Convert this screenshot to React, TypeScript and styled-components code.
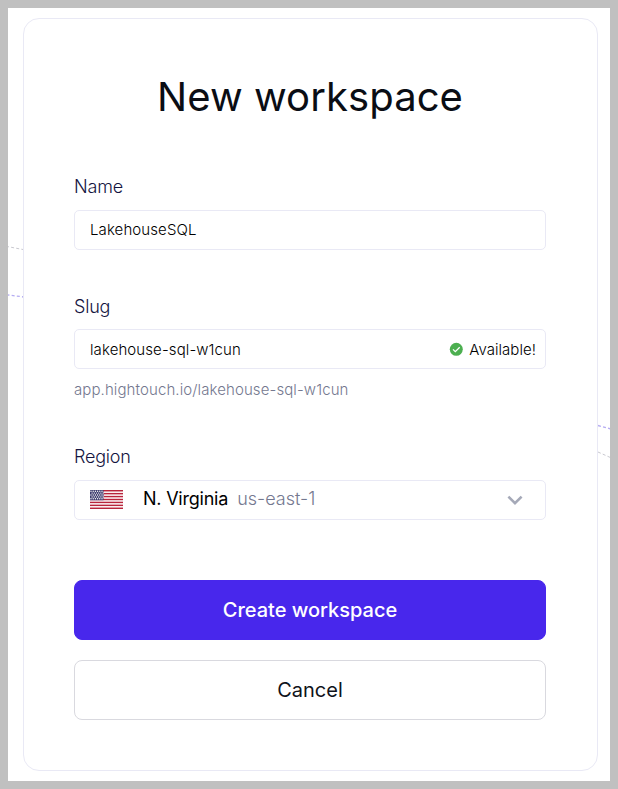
import React from "react";
import styled, { createGlobalStyle } from "styled-components";

const GlobalStyle = createGlobalStyle`
  *, *::before, *::after { box-sizing: border-box; }
  body { margin: 0; background: #c0c0c0; font-family: Inter, "Liberation Sans", sans-serif; }
  h1 { margin: 0; }
  button, input { font: inherit; }
`;

const Page = styled.main`
  position: relative;
  height: 789px;
  border: 8px solid #c0c0c0;
  background: #fff;
  padding: 10px 12px 10px 15px;
`;

const Backdrop = styled.svg`
  position: absolute;
  inset: 0;
  width: 602px;
  height: 773px;
`;

const Card = styled.form`
  position: relative;
  height: 753px;
  padding: 54px 51px 30px 50px;
  border: 1px solid #e9e9f5;
  border-radius: 16px;
  background: #fff;
  display: flex;
  flex-direction: column;
`;

const Title = styled.h1`
  height: 48px;
  margin-bottom: 54px;
  line-height: 48px;
  font-size: 40px;
  font-weight: 400;
  letter-spacing: 0.08px;
  text-align: center;
  white-space: nowrap;
  color: #0a0d14;
`;

const Field = styled.div<{ $gap: number; $after: number }>`
  display: flex;
  flex-direction: column;
  gap: ${(p) => p.$gap}px;
  margin-bottom: ${(p) => p.$after}px;
`;

const Label = styled.label`
  line-height: 24px;
  font-size: 18px;
  font-weight: 300;
  letter-spacing: -0.2px;
  color: #14143f;
`;

const Control = styled.div<{ $lift?: number }>`
  height: 40px;
  padding: 0 9px ${(p) => p.$lift ?? 0}px 15px;
  border: 1px solid #e9e9f5;
  border-radius: 5px;
  display: flex;
  align-items: center;
`;

const TextInput = styled.input`
  flex: 1;
  min-width: 0;
  height: 20px;
  padding: 0;
  border: 0;
  outline: 0;
  background: none;
  font-size: 15px;
  font-weight: 300;
  letter-spacing: 0.1px;
  color: #000;
`;

const Status = styled.span`
  display: flex;
  align-items: center;
  gap: 6px;
  font-size: 15px;
  font-weight: 300;
  letter-spacing: 0.04px;
  color: #000;
`;

const Hint = styled.div`
  margin-top: -1px;
  line-height: 24px;
  font-size: 15px;
  font-weight: 300;
  letter-spacing: 0.1px;
  color: #74788f;
`;

const RegionName = styled.span`
  margin-left: 20px;
  line-height: 24px;
  margin-top: -3px;
  font-size: 18px;
  letter-spacing: -0.22px;
  color: #000;
`;

const RegionCode = styled.span`
  flex: 1;
  margin-left: 9px;
  line-height: 24px;
  margin-top: -3px;
  font-size: 18px;
  font-weight: 300;
  color: #74788f;
`;

const FlagIcon = styled.svg`
  margin-top: -2px;
`;

const Chevron = styled.svg`
  margin-right: 13px;
`;

const Button = styled.button<{ $primary?: boolean }>`
  flex: none;
  height: 60px;
  margin: 0 0 20px;
  border: 1px solid ${(p) => (p.$primary ? "#4827ec" : "#d9d9df")};
  border-radius: 8px;
  background: ${(p) => (p.$primary ? "#4827ec" : "#fff")};
  color: ${(p) => (p.$primary ? "#fff" : "#10131a")};
  font-size: 20px;
  font-weight: ${(p) => (p.$primary ? 500 : 400)};
`;

const stripes = [0, 1, 2, 3, 4, 5, 6];
const stars = Array.from({ length: 30 }, (_, i) => ({
  x: 1 + (i % 6) * 2.2 + (Math.floor(i / 6) % 2) * 1.1,
  y: 1.2 + Math.floor(i / 6) * 1.9,
}));

const Flag = () => (
  <FlagIcon width="33" height="19" viewBox="0 0 33 19" aria-label="United States">
    <rect width="33" height="19" fill="#fff" />
    {stripes.map((i) => (
      <rect key={i} y={(i * 2 * 19) / 13} width="33" height={19 / 13} fill="#b8253c" />
    ))}
    <rect width="13.5" height="10.23" fill="#3c3b6e" />
    {stars.map((s, i) => (
      <circle key={i} cx={s.x} cy={s.y} r="0.7" fill="#fff" />
    ))}
  </FlagIcon>
);

const Check = () => (
  <svg width="14" height="14" viewBox="0 0 14 14">
    <circle cx="7.3" cy="7.3" r="6.5" fill="#4caf50" />
    <path d="M4 7.4 6.3 9.6 10.7 5.2" fill="none" stroke="#fff" strokeWidth="1.3" />
  </svg>
);

export default function App() {
  return (
    <>
      <GlobalStyle />
      <Page>
        <Backdrop viewBox="8 8 602 773" fill="none" strokeDasharray="3 2.2">
          <path d="M6 246.3 24 249.7" stroke="#c9c9d0" />
          <path d="M6.5 294.8 24 297" stroke="#b5acf2" strokeWidth="1.3" />
          <path d="M598 425.5 611 429" stroke="#b5acf2" strokeWidth="1.3" />
          <path d="M598 452 611 457.8" stroke="#c9c9d0" />
        </Backdrop>
        <Card onSubmit={(e) => e.preventDefault()}>
          <Title>New workspace</Title>
          <Field $gap={11} $after={45}>
            <Label htmlFor="name">Name</Label>
            <Control $lift={2}>
              <TextInput id="name" defaultValue="LakehouseSQL" />
            </Control>
          </Field>
          <Field $gap={10} $after={43}>
            <Label htmlFor="slug">Slug</Label>
            <Control>
              <TextInput id="slug" defaultValue="lakehouse-sql-w1cun" />
              <Status>
                <Check />
                Available!
              </Status>
            </Control>
            <Hint>app.hightouch.io/lakehouse-sql-w1cun</Hint>
          </Field>
          <Field $gap={11} $after={60}>
            <Label>Region</Label>
            <Control>
              <Flag />
              <RegionName>N. Virginia</RegionName>
              <RegionCode>us-east-1</RegionCode>
              <Chevron width="16" height="10" viewBox="0 0 16 10" fill="none">
                <path d="M1.4 1.6 8 8.1 14.6 1.6" stroke="#a5a9b8" strokeWidth="2.6" />
              </Chevron>
            </Control>
          </Field>
          <Button $primary type="submit">Create workspace</Button>
          <Button type="button">Cancel</Button>
        </Card>
      </Page>
    </>
  );
}
